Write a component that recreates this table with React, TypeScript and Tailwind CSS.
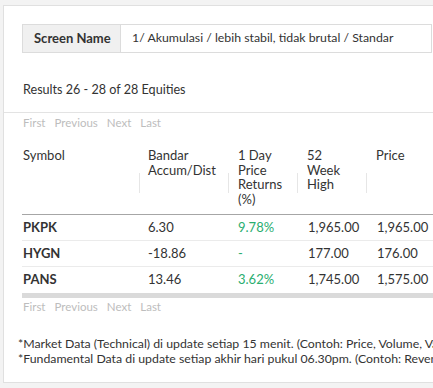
import React from 'react';

const rows = [
  { sym: 'PKPK', acc: '6.30', ret: '9.78%', high: '1,965.00', price: '1,965.00' },
  { sym: 'HYGN', acc: '-18.86', ret: '-', high: '177.00', price: '176.00' },
  { sym: 'PANS', acc: '13.46', ret: '3.62%', high: '1,745.00', price: '1,575.00' },
];

const sep =
  "relative before:content-[''] before:absolute before:left-0 before:top-[25px] before:h-[20px] before:border-l before:border-[#e6e6e6]";

function Pager() {
  return (
    <div className="flex gap-[9px] text-[11.5px] leading-[16px] text-[#bdbdbd]">
      <span>First</span>
      <span>Previous</span>
      <span>Next</span>
      <span>Last</span>
    </div>
  );
}

export default function App() {
  return (
    <div
      className="w-[433px] h-[388px] overflow-hidden bg-[#f3f3f3] pt-[5px] pl-[3px] text-[#333]"
      style={{ fontFamily: 'Lato, "Open Sans", sans-serif' }}
    >
      <div className="w-[460px] bg-white border border-[#e0e0e0] pt-[18px] pb-[16px]">
        <div className="ml-[18px] w-[410px] h-[29px] flex border border-[#dcdcdc] text-[13px]">
          <div className="w-[98px] shrink-0 bg-[#f0f0f0] border-r border-[#dcdcdc] flex items-center pl-[11px] font-bold">
            Screen Name
          </div>
          <div className="flex items-center pl-[11px] whitespace-nowrap text-[12.3px]">
            1/ Akumulasi / lebih stabil, tidak brutal / Standar
          </div>
        </div>

        <div className="ml-[19px] mt-[28px] text-[12.6px] leading-[18px]">Results 26 - 28 of 28 Equities</div>

        <div className="mt-[13px] border-t border-[#e3e3e3] pt-[2px] pl-[19px]">
          <Pager />
        </div>

        <div className="ml-[18px] mt-[17px] w-[440px] text-[13px]">
          <div className="flex border-b border-[#a6a6a6] leading-[14.7px] pb-[7px]">
            <div className="w-[117px] pl-[1px]">Symbol</div>
            <div className={`w-[89px] pl-[9px] ${sep}`}>Bandar<br />Accum/Dist</div>
            <div className={`w-[69px] pl-[10px] ${sep}`}>1 Day<br />Price<br />Returns<br />(%)</div>
            <div className={`w-[69px] pl-[10px] ${sep}`}>52<br />Week<br />High</div>
            <div className={`w-[90px] pl-[10px] ${sep}`}>Price</div>
          </div>
          {rows.map((r, i) => (
            <div
              key={r.sym}
              className={`flex items-center h-[26px] ${i < rows.length - 1 ? 'border-b border-[#ebebeb]' : ''}`}
            >
              <div className="w-[117px] pl-[1px] font-bold">{r.sym}</div>
              <div className="w-[89px] pl-[9px]">{r.acc}</div>
              <div className="w-[69px] pl-[10px] text-[#2aae70]">{r.ret}</div>
              <div className="w-[69px] pl-[11px] whitespace-nowrap">{r.high}</div>
              <div className="w-[90px] pl-[11px] whitespace-nowrap">{r.price}</div>
            </div>
          ))}
          <div className="h-[5px] bg-[#dadada]" />
          <div className="pt-[1px] pl-[1px]">
            <Pager />
          </div>
        </div>

        <div className="ml-[14px] mt-[21px] text-[12.3px] leading-[15px] whitespace-nowrap">
          <div>*Market Data (Technical) di update setiap 15 menit. (Contoh: Price, Volume, Value, Frequency)</div>
          <div>*Fundamental Data di update setiap akhir hari pukul 06.30pm. (Contoh: Revenue, Net Income)</div>
        </div>
      </div>
    </div>
  );
}
